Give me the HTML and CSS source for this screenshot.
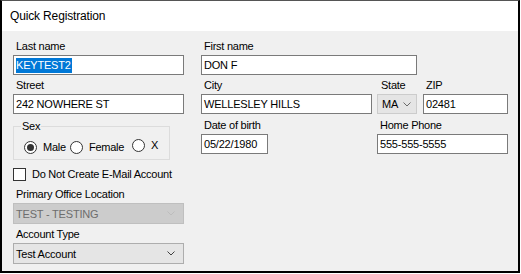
FILE: index.html
```html
<!DOCTYPE html>
<html>
<head>
<meta charset="utf-8">
<link rel="stylesheet" href="styles.css">
</head>
<body>
<div class="window">
  <div class="titlebar">Quick Registration</div>
  <div class="content">
    <div class="form">
      <div class="field c1">
        <div class="lbl">Last name</div>
        <div class="tb w171"><span class="sel">KEYTEST2</span></div>
      </div>
      <div class="field c23">
        <div class="lbl">First name</div>
        <div class="tb w216">DON F</div>
      </div>

      <div class="field c1">
        <div class="lbl">Street</div>
        <div class="tb w171">242 NOWHERE ST</div>
      </div>
      <div class="field c2">
        <div class="lbl">City</div>
        <div class="tb w171">WELLESLEY HILLS</div>
      </div>
      <div class="field c3">
        <div class="lbl lbl-state">State</div>
        <div class="combo combo-state">
          <span>MA</span>
          <svg class="chev" width="8" height="5" viewBox="0 0 8 5"><path d="M0.5 0.5 L4 4 L7.5 0.5" fill="none" stroke="#6a6a6a" stroke-width="1"/></svg>
        </div>
      </div>
      <div class="field c4">
        <div class="lbl">ZIP</div>
        <div class="tb w85">02481</div>
      </div>

      <fieldset class="group c1">
        <legend>Sex</legend>
        <div class="radios">
          <label class="radio r-male"><span class="dot checked"></span><span>Male</span></label>
          <label class="radio r-female"><span class="dot"></span><span>Female</span></label>
          <label class="radio r-x"><span class="dot"></span><span>X</span></label>
        </div>
      </fieldset>
      <div class="field c2 row3">
        <div class="lbl">Date of birth</div>
        <div class="tb w67">05/22/1980</div>
      </div>
      <div class="field c34 row3">
        <div class="lbl">Home Phone</div>
        <div class="tb w131">555-555-5555</div>
      </div>

      <label class="check c1">
        <span class="box"></span>
        <span>Do Not Create E-Mail Account</span>
      </label>

      <div class="field c1">
        <div class="lbl">Primary Office Location</div>
        <div class="combo combo-wide disabled">
          <span>TEST - TESTING</span>
          <svg class="chev" width="8" height="5" viewBox="0 0 8 5"><path d="M0.5 0.5 L4 4 L7.5 0.5" fill="none" stroke="#bdbdbd" stroke-width="1"/></svg>
        </div>
      </div>
      <div class="field c1">
        <div class="lbl">Account Type</div>
        <div class="combo combo-wide normal">
          <span>Test Account</span>
          <svg class="chev" width="8" height="5" viewBox="0 0 8 5"><path d="M0.5 0.5 L4 4 L7.5 0.5" fill="none" stroke="#404040" stroke-width="1"/></svg>
        </div>
      </div>
    </div>
  </div>
</div>
</body>
</html>
```

FILE: styles.css
```css
html, body {
  margin: 0;
  padding: 0;
  background: #ffffff;
}

body {
  font-family: "Liberation Sans", Arial, sans-serif;
  font-size: 11px;
  color: #000;
}

.window {
  box-sizing: border-box;
  width: 520px;
  height: 273px;
  border-top: 1px solid #555555;
  border-left: 2px solid #000;
  border-right: 2px solid #000;
  border-bottom: 2px solid #000;
  display: flex;
  flex-direction: column;
}

.titlebar {
  height: 30px;
  flex: none;
  background: #ffffff;
  display: flex;
  align-items: center;
  padding-left: 8px;
  font-size: 12px;
  letter-spacing: -0.15px;
}

.content {
  flex: 1;
  background: #f0f0f0;
  padding: 9px 0 0 11px;
}

.form {
  display: grid;
  grid-template-columns: 188px 176px 46px 85px;
  row-gap: 4px;
  align-items: start;
}

.c1 { grid-column: 1; }
.c2 { grid-column: 2; }
.c3 { grid-column: 3; }
.c4 { grid-column: 4; }
.c23 { grid-column: 2 / 4; }
.c34 { grid-column: 3 / 5; }

.row3 { margin-top: 1px; }

.field {
  display: flex;
  flex-direction: column;
  gap: 2px;
}

.lbl {
  height: 13px;
  line-height: 13px;
  padding-left: 3px;
  letter-spacing: -0.25px;
  white-space: nowrap;
}

.lbl-state { padding-left: 4px; }

.tb {
  box-sizing: border-box;
  height: 20px;
  border: 1px solid #7a7a7a;
  background: #fff;
  padding: 0 2px;
  display: flex;
  align-items: center;
  line-height: 13px;
  letter-spacing: -0.2px;
  white-space: nowrap;
}

.w171 { width: 171px; }
.w216 { width: 216px; }
.w85 { width: 85px; }
.w67 { width: 67px; }
.w131 { width: 131px; }

.sel {
  background: #0078d7;
  color: #fff;
  line-height: 15px;
  padding-right: 1px;
}

.combo {
  box-sizing: border-box;
  height: 20px;
  display: flex;
  align-items: center;
  justify-content: space-between;
  white-space: nowrap;
  letter-spacing: -0.2px;
}

.combo-state {
  width: 40px;
  background: #e5e5e5;
  border: 1px solid #cccccc;
  padding: 0 5px 0 4px;
}

.combo-wide {
  width: 171px;
  height: 21px;
  padding: 0 8px 0 2px;
}

.combo-wide.disabled {
  background: #cccccc;
  border: 1px solid #bfbfbf;
  color: #6d6d6d;
}

.combo-wide.normal {
  background: #e5e5e5;
  border: 1px solid #adadad;
}

.chev { display: block; flex: none; }

.group {
  box-sizing: border-box;
  width: 157px;
  height: 40px;
  margin: 2px 0 0 0;
  padding: 8px 0 0 10px;
  border: 1px solid #dcdcdc;
}

.group legend {
  padding: 0 1px;
  margin-left: -3px;
  line-height: 13px;
  letter-spacing: -0.25px;
}

.radios {
  display: flex;
  align-items: center;
  height: 13px;
}

.radio {
  display: flex;
  align-items: center;
  gap: 6px;
  line-height: 13px;
  letter-spacing: -0.25px;
}

.r-male { width: 46px; }
.r-female { width: 62px; }
.r-x { margin-top: -5px; }

.dot {
  box-sizing: border-box;
  width: 13px;
  height: 13px;
  border: 1px solid #333333;
  border-radius: 50%;
  background: #fff;
  display: flex;
  align-items: center;
  justify-content: center;
  flex: none;
}

.dot.checked::after {
  content: "";
  width: 7px;
  height: 7px;
  border-radius: 50%;
  background: #333333;
}

.check {
  display: flex;
  align-items: center;
  gap: 6px;
  height: 13px;
  line-height: 13px;
  margin: 4px 0 3px 0;
  letter-spacing: -0.25px;
  white-space: nowrap;
}

.box {
  box-sizing: border-box;
  width: 13px;
  height: 13px;
  border: 1px solid #333333;
  background: #fff;
  flex: none;
}
```
